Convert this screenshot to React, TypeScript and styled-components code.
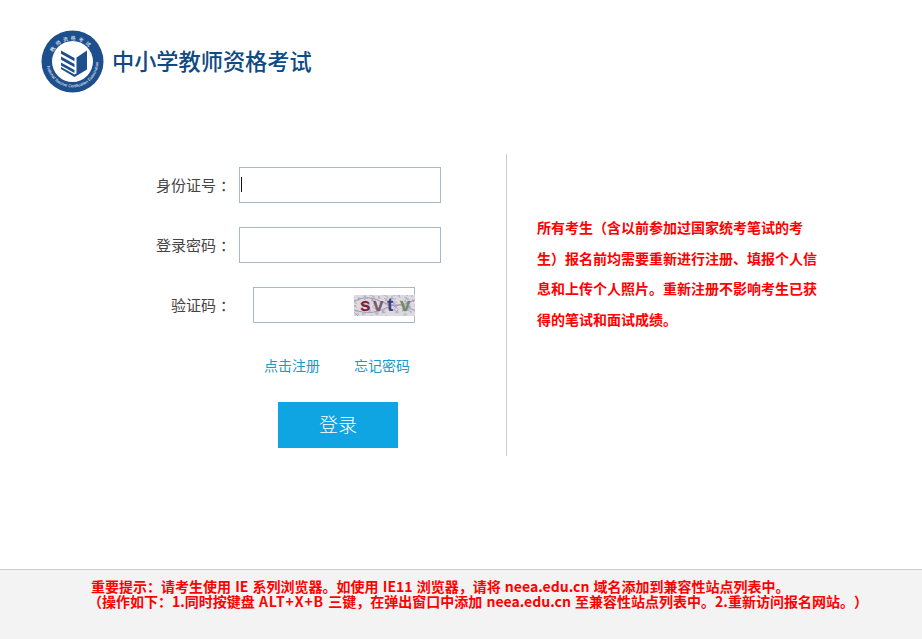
import { FC } from 'react';
import styled, { createGlobalStyle } from 'styled-components';

const GlobalStyle = createGlobalStyle`
   html, body {
      margin: 0;
      padding: 0;
      background: #fff;
   }
   body {
      font-family: "Noto Sans CJK SC", "Liberation Sans", sans-serif;
      text-spacing-trim: space-all;
   }
`;

const Page = styled.div`
   min-height: 100vh;
   display: flex;
   flex-direction: column;
`;

const Header = styled.header`
   display: flex;
   align-items: center;
   gap: 8px;
   padding: 30px 0 0 41px;
   height: 63px;
`;

const Title = styled.h1`
   margin: 0;
   font-size: 22.2px;
   font-weight: 500;
   color: #0f4a83;
   line-height: 61px;
   padding-bottom: 2px;
`;

const Main = styled.main`
   display: flex;
   margin-top: 61px;
   height: 302px;
`;

const FormPane = styled.form`
   width: 506px;
   border-right: 1px solid #ccc;
   padding-top: 13px;
`;

const Row = styled.div`
   display: flex;
   align-items: center;
   height: 36px;
   margin-bottom: 24px;
`;

const Label = styled.label<{ $gap?: number }>`
   width: 235px;
   margin-right: ${(p) => p.$gap ?? 4}px;
   padding-bottom: 2px;
   text-align: right;
   font-size: 15px;
   color: #444;
`;

const Colon = styled.span`
   margin-left: 4px;
`;

const Field = styled.div`
   position: relative;
   height: 36px;
`;

const Input = styled.input<{ $width: number }>`
   display: block;
   width: ${(p) => p.$width}px;
   height: 36px;
   box-sizing: border-box;
   border: 1px solid #a9b8c6;
   background: #fff;
   outline: none;
   padding: 0 8px;
`;

const Caret = styled.span`
   position: absolute;
   left: 2px;
   top: 10px;
   width: 1px;
   height: 15px;
   background: #111;
`;

const CaptchaBox = styled.div`
   position: absolute;
   right: 0;
   top: 8px;
   width: 61px;
   height: 21px;
   line-height: 0;
`;

const Links = styled.div`
   display: flex;
   gap: 34px;
   padding-left: 264px;
   margin-top: 32px;
   line-height: 20px;
`;

const LinkText = styled.a`
   font-size: 14px;
   color: #2196c9;
   text-decoration: none;
`;

const Submit = styled.button`
   display: block;
   width: 120px;
   height: 46px;
   margin: 27px 0 0 278px;
   border: 0;
   padding: 0 0 3px;
   background: #0fa5e3;
   color: #fff;
   font-family: inherit;
   font-size: 19px;
   font-weight: 300;
`;

const Notice = styled.p`
   margin: 0;
   padding: 58px 0 0 30px;
   font-size: 14px;
   font-weight: 700;
   line-height: 30.7px;
   white-space: nowrap;
   color: #f00;
`;

const Footer = styled.footer`
   margin-top: auto;
   height: 60px;
   background: #f3f3f3;
   border-top: 1px solid #ccc;
   padding: 9px 0 0 91px;
   font-size: 14px;
   font-weight: 700;
   line-height: 15px;
   word-spacing: 1px;
   color: #f00;
`;

const FooterLine = styled.div<{ $indent?: number }>`
   white-space: nowrap;
   margin-left: ${(p) => p.$indent ?? 0}px;
`;

const Keys = styled.span`
   letter-spacing: 0.9px;
`;

const Logo: FC = () => (
   <svg width="63" height="63" viewBox="0 0 63 63">
      <defs>
         <path id="ringTop" d="M10 31.5a21.5 21.5 0 0 1 43 0" />
         <path id="ringBottom" d="M5.6 31.5a25.9 25.9 0 0 0 51.8 0" />
      </defs>
      <circle cx="31.5" cy="31.5" r="31" fill="#1d4f8d" />
      <circle cx="31.5" cy="31.5" r="20.5" fill="#fff" />
      <text fontSize="5" fill="#fff" fontFamily="Noto Sans CJK SC, sans-serif" letterSpacing="2.4">
         <textPath href="#ringTop" startOffset="14%">教师资格考试</textPath>
      </text>
      <text fontSize="4" fill="#fff" fontFamily="Liberation Sans, sans-serif">
         <textPath href="#ringBottom" startOffset="6%">National Teacher Certification Examination</textPath>
      </text>
      <path d="M20 20.5l13.5 7.5v3.2L20 23.7zM20 26.5l13.5 7.5v3.2L20 29.7zM20 32.5l13.5 7.5v3L20 35.5z" fill="#1d4f8d" />
      <path d="M35.5 27.5L46 20.5v19L33.5 47 20 39v-2l13.5 7.5 2-1.2z" fill="#1d4f8d" />
   </svg>
);

const Captcha: FC = () => {
   const noise = Array.from({ length: 110 }, (_, i) => {
      const x = (i * 37) % 61;
      const y = (i * 23) % 21;
      return `M${x} ${y}l${(i * 7) % 11 - 5} ${(i * 5) % 9 - 4}`;
   }).join('');
   return (
      <svg width="61" height="21" viewBox="0 0 61 21">
         <rect width="61" height="21" fill="#dcd9e0" />
         <path d="M0 6q14-7 28 1t33-2M0 15q18 6 32-2t29 3" fill="none" stroke="#a29ab8" strokeWidth="1" />
         <path d={noise} fill="none" stroke="#a8a1b6" strokeWidth="0.7" />
         <g fontFamily="Liberation Sans, sans-serif" fontWeight="700" fontSize="19">
            <text x="6" y="16" fill="#7d2236">s</text>
            <text x="19" y="16" fill="#7a5a68">v</text>
            <text x="33" y="16" fill="#3d3f7c">t</text>
            <text x="46" y="16" fill="#6d8a63">v</text>
         </g>
      </svg>
   );
};

const App: FC = () => (
   <Page>
      <GlobalStyle />
      <Header>
         <Logo />
         <Title>中小学教师资格考试</Title>
      </Header>
      <Main>
         <FormPane>
            <Row>
               <Label>身份证号<Colon>：</Colon></Label>
               <Field>
                  <Input $width={202} type="text" />
                  <Caret />
               </Field>
            </Row>
            <Row>
               <Label>登录密码<Colon>：</Colon></Label>
               <Field>
                  <Input $width={202} type="password" />
               </Field>
            </Row>
            <Row>
               <Label $gap={18}>验证码<Colon>：</Colon></Label>
               <Field>
                  <Input $width={162} type="text" />
                  <CaptchaBox>
                     <Captcha />
                  </CaptchaBox>
               </Field>
            </Row>
            <Links>
               <LinkText href="#">点击注册</LinkText>
               <LinkText href="#">忘记密码</LinkText>
            </Links>
            <Submit type="button">登录</Submit>
         </FormPane>
         <Notice>
            所有考生（含以前参加过国家统考笔试的考<br />
            生）报名前均需要重新进行注册、填报个人信<br />
            息和上传个人照片。重新注册不影响考生已获<br />
            得的笔试和面试成绩。
         </Notice>
      </Main>
      <Footer>
         <FooterLine>重要提示：请考生使用 IE 系列浏览器。如使用 IE11 浏览器，请将 neea.edu.cn 域名添加到兼容性站点列表中。</FooterLine>
         <FooterLine $indent={-3}>（操作如下：1.同时按键盘 <Keys>ALT+X+B</Keys> 三键，在弹出窗口中添加 neea.edu.cn 至兼容性站点列表中。2.重新访问报名网站。）</FooterLine>
      </Footer>
   </Page>
);

export default App;
